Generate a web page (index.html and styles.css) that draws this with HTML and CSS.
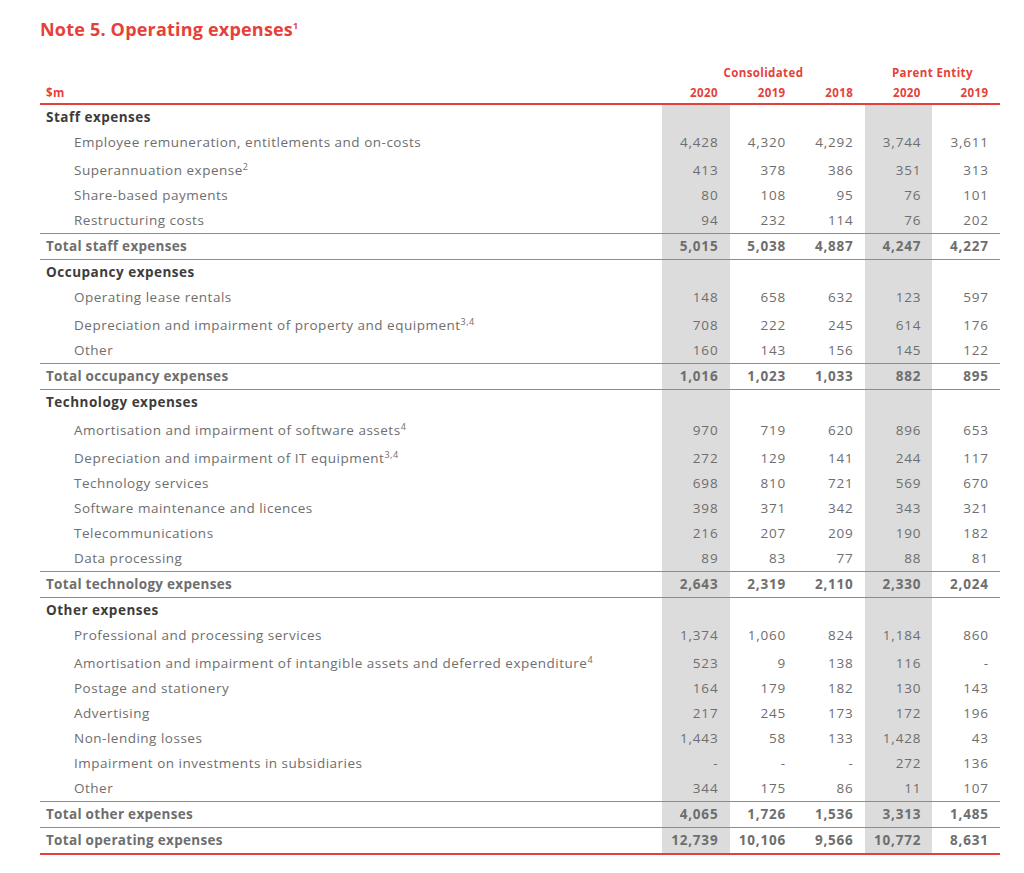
FILE: index.html
```html
<!DOCTYPE html>
<html>
<head>
<meta charset="utf-8">
<link rel="stylesheet" href="styles.css">
</head>
<body>
<div class="page">
  <h1 class="title">Note 5. Operating expenses<sup class="tsup">1</sup></h1>
  <table class="fin">
    <colgroup>
      <col class="c-label"><col class="c-num"><col class="c-num"><col class="c-num"><col class="c-num"><col class="c-num">
    </colgroup>
    <thead>
      <tr class="group-row">
        <th></th>
        <th colspan="3" class="group">Consolidated</th>
        <th colspan="2" class="group">Parent Entity</th>
      </tr>
      <tr class="year-row">
        <th class="unit">$m</th>
        <th>2020</th><th>2019</th><th>2018</th><th>2020</th><th>2019</th>
      </tr>
    </thead>
    <tbody>
      <tr class="section"><td>Staff expenses</td><td class="sh"></td><td></td><td></td><td class="sh"></td><td></td></tr>
      <tr class="item"><td>Employee remuneration, entitlements and on-costs</td><td class="sh">4,428</td><td>4,320</td><td>4,292</td><td class="sh">3,744</td><td>3,611</td></tr>
      <tr class="item tall"><td>Superannuation expense<sup>2</sup></td><td class="sh">413</td><td>378</td><td>386</td><td class="sh">351</td><td>313</td></tr>
      <tr class="item"><td>Share-based payments</td><td class="sh">80</td><td>108</td><td>95</td><td class="sh">76</td><td>101</td></tr>
      <tr class="item"><td>Restructuring costs</td><td class="sh">94</td><td>232</td><td>114</td><td class="sh">76</td><td>202</td></tr>
      <tr class="total"><td>Total staff expenses</td><td class="sh">5,015</td><td>5,038</td><td>4,887</td><td class="sh">4,247</td><td>4,227</td></tr>

      <tr class="section"><td>Occupancy expenses</td><td class="sh"></td><td></td><td></td><td class="sh"></td><td></td></tr>
      <tr class="item"><td>Operating lease rentals</td><td class="sh">148</td><td>658</td><td>632</td><td class="sh">123</td><td>597</td></tr>
      <tr class="item tall"><td>Depreciation and impairment of property and equipment<sup>3,4</sup></td><td class="sh">708</td><td>222</td><td>245</td><td class="sh">614</td><td>176</td></tr>
      <tr class="item"><td>Other</td><td class="sh">160</td><td>143</td><td>156</td><td class="sh">145</td><td>122</td></tr>
      <tr class="total"><td>Total occupancy expenses</td><td class="sh">1,016</td><td>1,023</td><td>1,033</td><td class="sh">882</td><td>895</td></tr>

      <tr class="section"><td>Technology expenses</td><td class="sh"></td><td></td><td></td><td class="sh"></td><td></td></tr>
      <tr class="item tall"><td>Amortisation and impairment of software assets<sup>4</sup></td><td class="sh">970</td><td>719</td><td>620</td><td class="sh">896</td><td>653</td></tr>
      <tr class="item tall"><td>Depreciation and impairment of IT equipment<sup>3,4</sup></td><td class="sh">272</td><td>129</td><td>141</td><td class="sh">244</td><td>117</td></tr>
      <tr class="item"><td>Technology services</td><td class="sh">698</td><td>810</td><td>721</td><td class="sh">569</td><td>670</td></tr>
      <tr class="item"><td>Software maintenance and licences</td><td class="sh">398</td><td>371</td><td>342</td><td class="sh">343</td><td>321</td></tr>
      <tr class="item"><td>Telecommunications</td><td class="sh">216</td><td>207</td><td>209</td><td class="sh">190</td><td>182</td></tr>
      <tr class="item"><td>Data processing</td><td class="sh">89</td><td>83</td><td>77</td><td class="sh">88</td><td>81</td></tr>
      <tr class="total"><td>Total technology expenses</td><td class="sh">2,643</td><td>2,319</td><td>2,110</td><td class="sh">2,330</td><td>2,024</td></tr>

      <tr class="section"><td>Other expenses</td><td class="sh"></td><td></td><td></td><td class="sh"></td><td></td></tr>
      <tr class="item"><td>Professional and processing services</td><td class="sh">1,374</td><td>1,060</td><td>824</td><td class="sh">1,184</td><td>860</td></tr>
      <tr class="item tall"><td>Amortisation and impairment of intangible assets and deferred expenditure<sup>4</sup></td><td class="sh">523</td><td>9</td><td>138</td><td class="sh">116</td><td>-</td></tr>
      <tr class="item"><td>Postage and stationery</td><td class="sh">164</td><td>179</td><td>182</td><td class="sh">130</td><td>143</td></tr>
      <tr class="item"><td>Advertising</td><td class="sh">217</td><td>245</td><td>173</td><td class="sh">172</td><td>196</td></tr>
      <tr class="item"><td>Non-lending losses</td><td class="sh">1,443</td><td>58</td><td>133</td><td class="sh">1,428</td><td>43</td></tr>
      <tr class="item"><td>Impairment on investments in subsidiaries</td><td class="sh">-</td><td>-</td><td>-</td><td class="sh">272</td><td>136</td></tr>
      <tr class="item"><td>Other</td><td class="sh">344</td><td>175</td><td>86</td><td class="sh">11</td><td>107</td></tr>
      <tr class="total"><td>Total other expenses</td><td class="sh">4,065</td><td>1,726</td><td>1,536</td><td class="sh">3,313</td><td>1,485</td></tr>
      <tr class="total grand"><td>Total operating expenses</td><td class="sh">12,739</td><td>10,106</td><td>9,566</td><td class="sh">10,772</td><td>8,631</td></tr>
    </tbody>
  </table>
</div>
</body>
</html>
```

FILE: styles.css
```css
html, body {
  margin: 0;
  padding: 0;
  background: #ffffff;
}

.page {
  padding: 18px 24px 0 40px;
  font-family: "Open Sans", "Liberation Sans", sans-serif;
}

.title {
  margin: 0 0 23px 0;
  font-size: 18px;
  line-height: 22px;
  font-weight: 700;
  letter-spacing: 0.2px;
  color: #e5413a;
}

.tsup {
  font-size: 9px;
  vertical-align: 7px;
  line-height: 0;
}

.fin {
  width: 960px;
  border-collapse: collapse;
  table-layout: fixed;
}

.c-label { width: 622px; }
.c-num { width: 67.6px; }

.fin th,
.fin td {
  padding: 0;
}

.group-row th {
  height: 20px;
  font-size: 11.5px;
  line-height: 20px;
  font-weight: 700;
  letter-spacing: 0.4px;
  color: #e5413a;
  text-align: center;
}

.year-row th {
  height: 20px;
  font-size: 11.5px;
  line-height: 20px;
  font-weight: 700;
  letter-spacing: 0.4px;
  color: #e5413a;
  text-align: right;
  padding-right: 11.6px;
  border-bottom: 2px solid #e5413a;
}

.year-row th.unit {
  text-align: left;
  padding-left: 6px;
  padding-right: 0;
}

.fin tbody td {
  height: 25px;
  line-height: 25px;
  font-size: 13.5px;
  letter-spacing: 0.8px;
  text-align: right;
  padding-right: 11.2px;
  color: #6e6e6e;
  white-space: nowrap;
}

.fin tbody td:first-child {
  text-align: left;
  padding-right: 0;
  letter-spacing: 0.5px;
}

.fin tbody td.sh {
  background: #dcdcdc;
}

.section td:first-child {
  padding-left: 6px;
  font-weight: 700;
  letter-spacing: 0.3px;
  color: #3c3c3c;
}

.item td:first-child {
  padding-left: 34px;
}

.tall td {
  height: 28px;
  padding-top: 3px;
  box-sizing: border-box;
}

.item sup {
  font-size: 9px;
  line-height: 0;
  vertical-align: 5px;
}

.total td {
  font-weight: 700;
  color: #3c3c3c;
  border-top: 1px solid #8c8c8c;
  border-bottom: 1px solid #8c8c8c;
}

.fin tbody .total td:first-child {
  padding-left: 6px;
  letter-spacing: 0.3px;
}

.grand td {
  border-bottom: 2px solid #e5413a;
}
```
